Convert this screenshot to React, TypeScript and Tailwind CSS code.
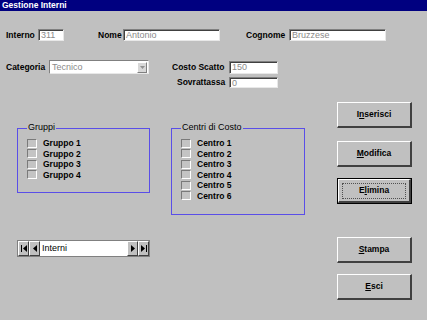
import React from "react";

// Win3.x style form: "Gestione Interni"

const font = "font-['Liberation_Sans',Arial,sans-serif]";

const Field = ({ value, className }: { value: string; className: string }) => (
  <div
    className={`${className} bg-white border-t border-l border-t-[#808080] border-l-[#808080] border-b border-r border-b-[#e8e8e8] border-r-[#e8e8e8] shadow-[inset_1px_1px_0_#404040] flex items-center pl-[2px] pt-[1px] text-[9px] leading-none text-[#8a8a8a]`}
  >
    {value}
  </div>
);

const Label = ({ children, className }: { children: React.ReactNode; className: string }) => (
  <span className={`${className} text-[8.5px] font-bold leading-none text-black whitespace-nowrap`}>{children}</span>
);

const Check = ({ label }: { label: string }) => (
  <div className="flex items-center h-[10.5px]">
    <div className="w-[10px] h-[9px] bg-[#c4c4c4] border-t border-l border-t-[#7a7a7a] border-l-[#7a7a7a] border-b border-r border-b-white border-r-white" />
    <span className="ml-[6px] text-[8.5px] font-bold leading-none text-black">{label}</span>
  </div>
);

const Group = ({
  title,
  items,
  className,
}: {
  title: string;
  items: string[];
  className: string;
}) => (
  <div className={`${className} relative border border-[#5a4ee8]`}>
    <span className="absolute left-[9px] top-[-6px] bg-[#c0c0c0] px-[1px] text-[9px] leading-none text-black">
      {title}
    </span>
    <div className="pl-[9px] pt-[9px] flex flex-col">
      {items.map((it) => (
        <Check key={it} label={it} />
      ))}
    </div>
  </div>
);

const Btn = ({
  children,
  className = "",
  isDefault = false,
}: {
  children: React.ReactNode;
  className?: string;
  isDefault?: boolean;
}) => (
  <div
    className={`${className} w-[75px] h-[26px] ${
      isDefault ? "border border-black" : ""
    }`}
  >
    <div className="w-full h-full bg-[#c0c0c0] border-t border-l border-t-white border-l-white border-b-2 border-r-2 border-b-[#404040] border-r-[#404040] flex items-center justify-center">
      <div
        className={`flex items-center justify-center ${
          isDefault ? "w-[64px] h-[16px] border border-dotted border-[#505050]" : ""
        } text-[8.5px] font-bold text-black leading-none`}
      >
        {children}
      </div>
    </div>
  </div>
);

const NavBtn = ({ dir, bar }: { dir: "l" | "r"; bar?: boolean }) => (
  <div className="w-[11px] h-full bg-[#c0c0c0] border-t border-l border-t-white border-l-white border-b border-r border-b-[#404040] border-r-[#404040] flex items-center justify-center gap-[1px]">
    {bar && dir === "l" && <div className="w-[1px] h-[7px] bg-black" />}
    <svg width="4" height="7" viewBox="0 0 4 7">
      {dir === "l" ? <polygon points="4,0 4,7 0,3.5" fill="black" /> : <polygon points="0,0 0,7 4,3.5" fill="black" />}
    </svg>
    {bar && dir === "r" && <div className="w-[1px] h-[7px] bg-black" />}
  </div>
);

export default function App() {
  return (
    <div className={`${font} w-[427px] h-[320px] bg-[#c0c0c0] overflow-hidden`}>
      {/* Title */}
      <div className="h-[11px] bg-[#000080] flex items-center pl-[2px]">
        <span className="text-[8.5px] font-bold text-white leading-none">Gestione Interni</span>
      </div>

      {/* Row 1 */}
      <div className="mt-[18px] flex items-center h-[12px]">
        <Label className="ml-[6px] w-[32px]">Interno</Label>
        <Field value="311" className="w-[26px] h-[12px]" />
        <Label className="ml-[34px] w-[25px]">Nome</Label>
        <Field value="Antonio" className="w-[97px] h-[12px]" />
        <Label className="ml-[26px] w-[43px]">Cognome</Label>
        <Field value="Bruzzese" className="w-[97px] h-[12px]" />
      </div>

      {/* Row 2 */}
      <div className="mt-[19px] flex items-center h-[14px]">
        <Label className="ml-[6px] w-[43px]">Categoria</Label>
        <div className="w-[100px] h-[14px] bg-white border-t border-l border-t-[#808080] border-l-[#808080] border-b border-r border-b-[#e8e8e8] border-r-[#e8e8e8] flex items-center">
          <span className="flex-1 pl-[2px] pt-[1px] text-[9px] leading-none text-[#8a8a8a]">Tecnico</span>
          <div className="w-[10px] h-[11px] mr-[1px] bg-[#d8d8d8] border-t border-l border-t-white border-l-white border-b border-r border-b-[#808080] border-r-[#808080] flex items-center justify-center">
            <svg width="5" height="3" viewBox="0 0 5 3">
              <polygon points="0,0 5,0 2.5,3" fill="#909090" />
            </svg>
          </div>
        </div>
        <Label className="ml-[23px] w-[57px]">Costo Scatto</Label>
        <Field value="150" className="w-[49px] h-[13px]" />
      </div>

      {/* Row 3 */}
      <div className="mt-[3px] flex items-center h-[11px]">
        <Label className="ml-[177px] w-[52px]">Sovrattassa</Label>
        <Field value="0" className="w-[49px] h-[11px]" />
      </div>

      {/* Bottom area */}
      <div className="mt-[14px] flex">
        <div className="w-[337px]">
          <div className="mt-[26px] flex items-start">
            <Group
              title="Gruppi"
              items={["Gruppo 1", "Gruppo 2", "Gruppo 3", "Gruppo 4"]}
              className="ml-[17px] w-[133px] h-[65px]"
            />
            <Group
              title="Centri di Costo"
              items={["Centro 1", "Centro 2", "Centro 3", "Centro 4", "Centro 5", "Centro 6"]}
              className="ml-[21px] w-[134px] h-[87px]"
            />
          </div>
          {/* Navigator */}
          <div className="mt-[25px] ml-[17px] w-[133px] h-[17px] flex border border-[#808080] bg-white">
            <NavBtn dir="l" bar />
            <NavBtn dir="l" />
            <div className="flex-1 flex items-center pl-[2px] text-[9px] leading-none text-black">Interni</div>
            <NavBtn dir="r" />
            <NavBtn dir="r" bar />
          </div>
        </div>

        {/* Buttons */}
        <div className="flex flex-col">
          <Btn>
            I<u>n</u>serisci
          </Btn>
          <Btn className="mt-[13px]">
            <u>M</u>odifica
          </Btn>
          <Btn className="mt-[11px]" isDefault>
            E<u>l</u>imina
          </Btn>
          <Btn className="mt-[33px]">
            <u>S</u>tampa
          </Btn>
          <Btn className="mt-[11px]">
            <u>E</u>sci
          </Btn>
        </div>
      </div>
    </div>
  );
}
